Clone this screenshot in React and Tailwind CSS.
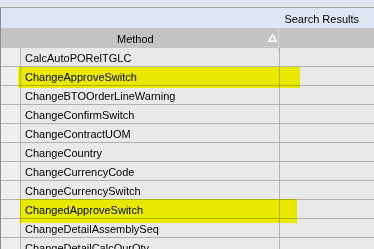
const rows = [
  "CalcAutoPORelTGLC",
  "ChangeApproveSwitch",
  "ChangeBTOOrderLineWarning",
  "ChangeConfirmSwitch",
  "ChangeContractUOM",
  "ChangeCountry",
  "ChangeCurrencyCode",
  "ChangeCurrencySwitch",
  "ChangedApproveSwitch",
  "ChangeDetailAssemblySeq",
  "ChangeDetailCalcOurQty",
];

export default function App() {
  return (
    <div
      className="relative w-[374px] h-[249px] overflow-hidden bg-[#dde7f3] text-[11px] text-black"
      style={{ fontFamily: '"Liberation Sans", Arial, sans-serif' }}
    >
      {/* top strip */}
      <div className="h-[8px] bg-[#dde7f3] border-b border-[#a3a3a3]" />

      {/* results panel */}
      <div className="border-l border-[#8c8c8c]">
        <div className="h-[20px] bg-[#dde8f4] flex items-center justify-end pr-[15px] pt-[2px] leading-none">
          Search Results
        </div>

        {/* header */}
        <div className="h-[20px] bg-[#c4c4c4] grid grid-cols-[278px_1fr]">
          <div className="relative border-r border-[#d6d6d6] pl-[116px] leading-[22px]">
            Method
            <svg className="absolute left-[267px] top-[6px]" width="9" height="8" viewBox="0 0 9 8">
              <path d="M4.5 0.8 L8.3 7.3 L0.7 7.3 Z" fill="#c4c4c4" stroke="#ffffff" strokeWidth="1.4" />
            </svg>
          </div>
          <div />
        </div>

        {/* rows */}
        {rows.map((name) => (
          <div
            key={name}
            className="h-[19px] grid grid-cols-[20px_259px_1fr] border-b border-[#b0b0b0] bg-[#e9e9e9]"
          >
            <div className="bg-[#efefef] border-r border-[#b0b0b0]" />
            <div className="border-r border-[#b0b0b0] pl-[4px] leading-[20px] whitespace-nowrap overflow-hidden">
              {name}
            </div>
            <div />
          </div>
        ))}
      </div>

      {/* highlighter marks */}
      <div className="absolute left-[18px] top-[67px] w-[282px] h-[21px] bg-[#ffff00] mix-blend-multiply" />
      <div className="absolute left-[20px] top-[199px] w-[277px] h-[24px] bg-[#ffff00] mix-blend-multiply" />
    </div>
  );
}
